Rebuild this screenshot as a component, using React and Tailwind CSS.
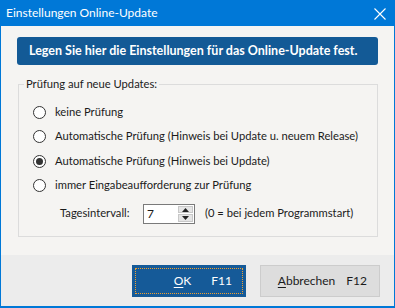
import React from "react";

const Radio = ({ checked, label }) => (
  <label className="flex items-center h-[24.5px] whitespace-nowrap">
    <span className="w-[13px] h-[13px] shrink-0 rounded-full border border-[#333333] bg-white flex items-center justify-center">
      {checked && <span className="w-[7px] h-[7px] rounded-full bg-[#333333]" />}
    </span>
    <span className="ml-[9px]">{label}</span>
  </label>
);

const App = () => {
  return (
    <div
      className="w-[395px] h-[308px] flex flex-col border-x border-b-2 border-[#0078d7] text-[11.2px] text-[#1b1b1b] bg-[#f5f4f2] whitespace-nowrap"
      style={{ fontFamily: 'Lato, "Liberation Sans", sans-serif' }}
    >
      {/* title bar */}
      <div className="h-[26px] -mx-px bg-[#0078d7] flex items-center justify-between pl-[6px] pr-[9px] text-white">
        <span className="text-[12px]">Einstellungen Online-Update</span>
        <svg width="12" height="12" viewBox="0 0 12 12" className="mt-[1px]">
          <path d="M0.5 0.5 L11.5 11.5 M11.5 0.5 L0.5 11.5" stroke="white" strokeWidth="1.1" />
        </svg>
      </div>

      {/* content */}
      <div className="flex-1 flex flex-col px-[16px] pt-[11px]">
        <div className="h-[28px] rounded-[3px] bg-[#135a96] text-white text-[12.5px] font-bold flex items-center pl-[12px]">
          Legen Sie hier die Einstellungen für das Online-Update fest.
        </div>

        <fieldset className="mt-[11px] ml-[1px] h-[161px] border border-[#dcdcdc] pl-[14px] pr-[8px] pt-[7px]">
          <legend className="px-[2px] ml-[-9px]">Prüfung auf neue Updates:</legend>
          <div className="flex flex-col">
            <Radio label="keine Prüfung" />
            <Radio label="Automatische Prüfung (Hinweis bei Update u. neuem Release)" />
            <Radio checked label="Automatische Prüfung (Hinweis bei Update)" />
            <Radio label="immer Eingabeaufforderung zur Prüfung" />
          </div>
          <div className="flex items-center mt-[6px] ml-[27px]">
            <span className="w-[83px]">Tagesintervall:</span>
            <div className="w-[52px] h-[20px] border border-[#7a7a7a] bg-white flex">
              <span className="flex-1 pl-[3px] leading-[18px] text-[12px]">7</span>
              <div className="w-[18px] flex flex-col border-l border-white p-[1px] gap-[1px]">
                <div className="flex-1 bg-[#e5e5e5] border border-[#c8c8c8] flex items-center justify-center">
                  <svg width="7" height="4" viewBox="0 0 7 4">
                    <path d="M0 4 L3.5 0 L7 4 Z" fill="#222" />
                  </svg>
                </div>
                <div className="flex-1 bg-[#e5e5e5] border border-[#c8c8c8] flex items-center justify-center">
                  <svg width="7" height="4" viewBox="0 0 7 4">
                    <path d="M0 0 L3.5 4 L7 0 Z" fill="#222" />
                  </svg>
                </div>
              </div>
            </div>
            <span className="ml-[10px]">(0 = bei jedem Programmstart)</span>
          </div>
        </fieldset>
      </div>

      {/* footer */}
      <div className="h-[51px] bg-[#ececec] flex justify-end items-start pt-[10px] pr-[14px] gap-[14px] text-[12px]">
        <button className="w-[114px] h-[32px] bg-[#155a98] text-white p-[3px]">
          <div className="w-full h-full border border-dotted border-[#f0a030] flex items-center justify-end pr-[10px]">
            <span>
              <span className="underline underline-offset-2">O</span>K
            </span>
            <span className="ml-[20px]">F11</span>
          </div>
        </button>
        <button className="w-[120px] h-[32px] bg-[#dddddd] border border-[#cccccc] flex items-center justify-end pr-[12px]">
          <span>
            <span className="underline underline-offset-2">A</span>bbrechen
          </span>
          <span className="ml-[11px]">F12</span>
        </button>
      </div>
    </div>
  );
};

export default App;
